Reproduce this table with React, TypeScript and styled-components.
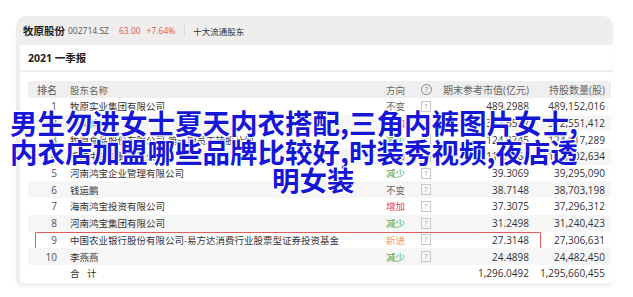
import styled, { createGlobalStyle } from "styled-components";

type Direction = "不变" | "增加" | "减少" | "新进";

interface Holder {
  rank: string;
  name: string;
  dir?: Direction;
  value: string;
  shares: string;
  linked?: boolean;
  highlight?: boolean;
}

const holders: Holder[] = [
  { rank: "1", name: "牧原实业集团有限公司", dir: "不变", value: "489.2988", shares: "489,152,016", linked: true },
  { rank: "2", name: "秦英林", dir: "增加", value: "372.6532", shares: "372,551,412" },
  { rank: "3", name: "牧原食品股份有限公司-第一期员工持股计划", dir: "减少", value: "124.0745", shares: "124,017,289", linked: true },
  { rank: "4", name: "香港中央结算有限公司", dir: "增加", value: "111.1364", shares: "111,102,634", linked: true },
  { rank: "5", name: "河南鸿宝企业管理有限公司", dir: "减少", value: "39.3069", shares: "39,295,090", linked: true },
  { rank: "6", name: "钱运鹏", dir: "不变", value: "38.7148", shares: "38,703,198" },
  { rank: "7", name: "海南鸿宝投资有限公司", dir: "增加", value: "37.3075", shares: "37,296,312" },
  { rank: "8", name: "河南鸿宝集团有限公司", dir: "减少", value: "31.2498", shares: "31,240,423" },
  { rank: "9", name: "中国农业银行股份有限公司-易方达消费行业股票型证券投资基金", dir: "新进", value: "27.3148", shares: "27,306,631", highlight: true },
  { rank: "10", name: "李燕燕", dir: "减少", value: "24.4898", shares: "24,482,450" },
];

const dirColors: Record<Direction, string> = {
  不变: "#666",
  增加: "#e64545",
  减少: "#46a64f",
  新进: "#eea25a",
};

const GlobalStyle = createGlobalStyle`
  body {
    margin: 0;
    background: #fff;
    font-family: "Open Sans", "Noto Sans CJK SC", sans-serif;
    color: #333;
  }
`;

const App = () => {
  return (
    <Page>
      <GlobalStyle />
      <Card>
        <StockBar>
          <StockName>牧原股份</StockName>
          <StockCode>002714.SZ</StockCode>
          <Price>63.00</Price>
          <Price>+7.64%</Price>
          <Divider />
          <Section>十大流通股东</Section>
        </StockBar>
        <Body>
          <Period>2021 一季报</Period>
          <Table>
            <HeadRow>
              <Rank>排名</Rank>
              <Name>股东名称</Name>
              <Dir>方向</Dir>
              <Help>
                <HelpCircle>?</HelpCircle>
              </Help>
              <Num>期末参考市值(亿元)</Num>
              <Num>持股数量(股)</Num>
            </HeadRow>
            {holders.map((h, i) => (
              <Row key={h.rank} $alt={i % 2 === 1} $highlight={h.highlight}>
                <Rank>{h.rank}</Rank>
                <Name>{h.linked ? <Link>{h.name}</Link> : h.name}</Name>
                <Dir style={{ color: h.dir ? dirColors[h.dir] : undefined }}>{h.dir}</Dir>
                <Help>
                  <HelpBox>?</HelpBox>
                </Help>
                <Num>{h.value}</Num>
                <Num>{h.shares}</Num>
              </Row>
            ))}
            <Row $alt={false}>
              <Rank />
              <Name>合&nbsp;&nbsp;&nbsp;计</Name>
              <Dir />
              <Help />
              <Num>1,296.0492</Num>
              <Num>1,295,660,455</Num>
            </Row>
          </Table>
        </Body>
      </Card>
      <Overlay>
        <OverlayLine>男生勿进女士夏天内衣搭配,三角内裤图片女士,</OverlayLine>
        <OverlayLine>内衣店加盟哪些品牌比较好,时装秀视频,夜店透</OverlayLine>
        <OverlayLine $center>明女装</OverlayLine>
      </Overlay>
    </Page>
  );
};

const Page = styled.div`
  position: relative;
  width: 633px;
  height: 297px;
  overflow: hidden;
`;

const Card = styled.div`
  margin: 16px 0 0 16px;
  width: 597px;
  border-radius: 10px 10px 6px 6px;
  background: #efeeed;
  padding: 0 0 2px 4px;
  box-sizing: border-box;
  box-shadow: 0 2px 3px rgba(0, 0, 0, 0.05);
`;

const StockBar = styled.div`
  height: 29px;
  display: flex;
  align-items: center;
  padding-left: 3px;
  white-space: nowrap;
`;

const StockName = styled.span`
  font-size: 10.5px;
  font-weight: 700;
  color: #222;
  margin-right: 3px;
`;

const StockCode = styled.span`
  font-size: 8.5px;
  color: #555;
  margin-right: 10px;
`;

const Price = styled.span`
  font-size: 8.5px;
  color: #d9534f;
  margin-right: 6px;
`;

const Divider = styled.span`
  width: 1px;
  height: 11px;
  background: #dcdcdc;
  margin: 0 8px 0 3px;
`;

const Section = styled.span`
  font-size: 8.5px;
  color: #333;
`;

const Body = styled.div`
  background: #fff;
  padding-bottom: 1px;
`;

const Period = styled.div`
  height: 25px;
  display: flex;
  align-items: center;
  padding-left: 8px;
  font-size: 10.5px;
  font-weight: 700;
  color: #222;
  border-bottom: 2px solid #eeeeee;
`;

const Table = styled.div`
  padding: 9px 2px 0 8px;
`;

const HeadRow = styled.div`
  display: grid;
  grid-template-columns: 29px 328px 30px 25px 89px 1fr;
  align-items: center;
  height: 17px;
  background: #efefef;
  color: #666;
  font-size: 9.5px;
  padding-right: 6px;
  & > :nth-child(2) {
    padding-left: 13px;
  }
`;

const Row = styled(HeadRow)<{ $alt: boolean; $highlight?: boolean }>`
  position: relative;
  height: 16.7px;
  background: ${(p) => (p.$alt ? "#f6f6f6" : "#fff")};
  color: #333;

  &::after {
    content: "";
    display: ${(p) => (p.$highlight ? "block" : "none")};
    position: absolute;
    left: 7px;
    width: 504px;
    top: 0;
    bottom: -2px;
    border: 1.5px solid #e25a5a;
    border-radius: 1px;
  }
`;

const Rank = styled.span`
  text-align: right;
  font-size: 10px;
  color: #555;
`;

const Name = styled.span`
  white-space: nowrap;
  overflow: hidden;
  font-size: 9.5px;
`;

const Link = styled.span`
  border-bottom: 1px solid #b5b5b5;
`;

const Dir = styled.span`
  font-size: 9.5px;
  padding-left: 1px;
`;

const Help = styled.span`
  display: flex;
  justify-content: flex-start;
  padding-left: 6px;
`;

const HelpCircle = styled.span`
  width: 9px;
  height: 9px;
  border: 1px solid #888;
  border-radius: 50%;
  font-size: 7px;
  line-height: 9px;
  text-align: center;
  color: #777;
`;

const HelpBox = styled.span`
  width: 8px;
  height: 9px;
  border: 1px solid #c8c8c8;
  font-size: 7px;
  line-height: 9px;
  text-align: center;
  color: #aaa;
`;

const Num = styled.span`
  text-align: right;
  font-size: 10px;
  white-space: nowrap;
`;

const Overlay = styled.div`
  position: absolute;
  left: 0;
  top: 108px;
  width: 633px;
  font-family: "Noto Sans CJK SC", sans-serif;
  font-weight: 700;
  font-size: 27.5px;
  line-height: 28.5px;
  color: #1616d6;
  text-shadow: 1px 1px 0 #fff, -1px -1px 0 #fff, 1px -1px 0 #fff, -1px 1px 0 #fff,
    0 0 2px #fff;
`;

const OverlayLine = styled.div<{ $center?: boolean }>`
  white-space: nowrap;
  padding-left: ${(p) => (p.$center ? "272px" : "10px")};
`;

export default App;
